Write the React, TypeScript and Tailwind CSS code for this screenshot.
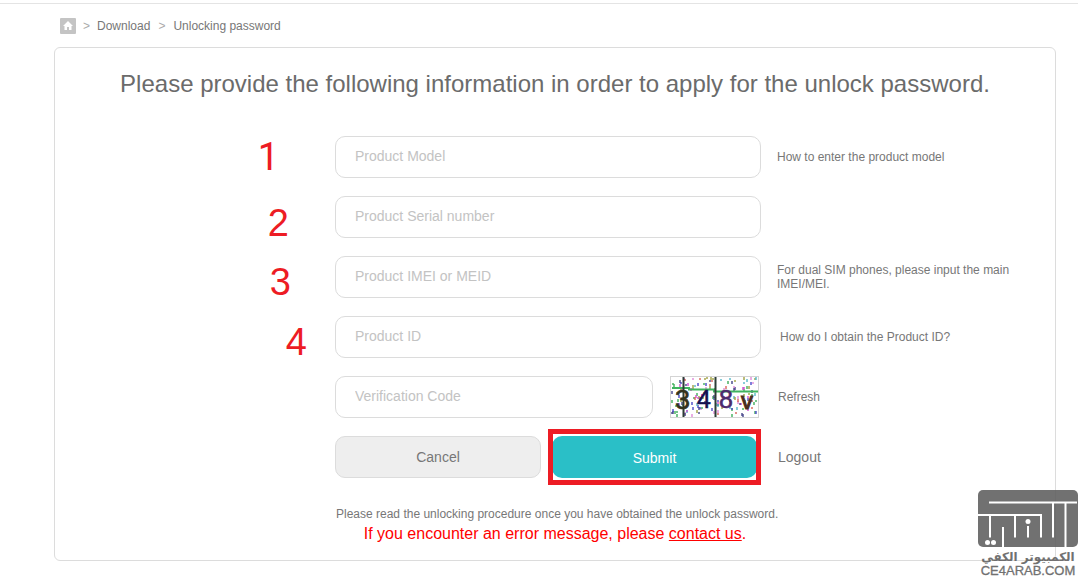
import { useState } from 'react';

interface Field {
  id: string;
  label: string;
  step: string;
  stepClass: string;
  hint?: string;
  hintClass?: string;
  isLink?: boolean;
}

const FIELDS: Field[] = [
  { id: 'model', label: 'Product Model', step: '1', stepClass: "pr-14 font-['Roboto',sans-serif]", hint: 'How to enter the product model', hintClass: 'pl-4', isLink: true },
  { id: 'serial', label: 'Product Serial number', step: '2', stepClass: 'pt-3 pr-[46px]' },
  { id: 'imei', label: 'Product IMEI or MEID', step: '3', stepClass: 'pt-2.5 pr-11', hint: 'For dual SIM phones, please input the main IMEI/MEI.', hintClass: 'pl-4' },
  { id: 'productId', label: 'Product ID', step: '4', stepClass: 'pt-2.5 pr-7', hint: 'How do I obtain the Product ID?', hintClass: 'pl-[19px]', isLink: true },
];

const ROW = 'grid grid-cols-[28%_minmax(0,1fr)_294px] items-center';
const INPUT =
  'h-[42px] w-full min-w-0 rounded-[10px] border border-[#dcdcdc] bg-white px-[19px] pb-0.5 text-sm text-[#666] placeholder:text-[#c3c3c3] outline-none';

const NOISE_COLORS = ['#d04fd0', '#4a4ac8', '#3fae5a', '#d8645a', '#54b8c8', '#a0a040', '#444488', '#e08ad8'];

// fixed seed keeps the speckles the same on every render
function makeNoise(count: number) {
  let seed = 41;
  const next = () => {
    seed = (seed * 16807) % 2147483647;
    return seed / 2147483647;
  };
  return Array.from({ length: count }, () => ({
    x: 1 + Math.floor(next() * 85),
    y: 1 + Math.floor(next() * 38),
    w: 2,
    h: next() > 0.4 ? 3 : 2,
    color: NOISE_COLORS[Math.floor(next() * NOISE_COLORS.length)],
  }));
}

const NOISE = makeNoise(150);

function Captcha() {
  return (
    <svg width="89" height="42" viewBox="0 0 89 42" role="img" aria-label="Verification code" className="shrink-0">
      <rect x="0.5" y="0.5" width="88" height="41" fill="#fff" stroke="#d4d4d4" />
      {NOISE.map((n, i) => (
        <rect key={i} x={n.x} y={n.y} width={n.w} height={n.h} fill={n.color} opacity="0.7" />
      ))}
      <path d="M2 12h17v1.5h25v2h44" fill="none" stroke="#3fb45f" strokeWidth="2" />
      <path d="M13.5 1v40M45.5 1v40" stroke="#2d3d36" strokeWidth="2" />
      <g fontFamily="Liberation Sans, Arial, sans-serif" fontSize="25" strokeWidth="0.6">
        <text x="5" y="33" fontSize="27" fill="#33331c" stroke="#33331c">3</text>
        <text x="27" y="32" fill="#15104f" stroke="#15104f">4</text>
        <text x="49" y="32" fill="#4c2a6c" stroke="#4c2a6c">8</text>
        <text x="71" y="33" fontSize="24" fill="#4a2c1c" stroke="#4a2c1c" strokeWidth="1">v</text>
      </g>
    </svg>
  );
}

function Watermark() {
  return (
    <svg width="100" height="88" viewBox="0 0 100 88" role="img" aria-label="CE4ARAB.COM" className="absolute right-0 bottom-0 opacity-90">
      <rect x="0" y="0" width="100" height="57" rx="5" fill="#626262" />
      <g fill="none" stroke="#fff" strokeWidth="2">
        <path d="M11 12.5h88M87.5 12.5v44.5" />
        <path d="M75 12.5v35" />
        <path d="M0 25h63v22.5" />
        <path d="M12 25v22.5M37 25v22.5M25 37v20M50 36v11.5" />
      </g>
      <g fill="#fff">
        <circle cx="50" cy="31.5" r="2.5" />
        <circle cx="9.5" cy="52.5" r="2.5" />
        <circle cx="15.5" cy="52.5" r="2.5" />
      </g>
      <text x="50" y="71" textAnchor="middle" direction="rtl" fontFamily="DejaVu Sans, sans-serif" fontWeight="700" fontSize="12" fill="#626262">
        الكمبيوتر الكفي
      </text>
      <text x="50" y="85" textAnchor="middle" fontFamily="Liberation Sans, Arial, sans-serif" fontSize="13" fill="#626262" stroke="#626262" strokeWidth="0.3">
        CE4ARAB.COM
      </text>
    </svg>
  );
}

function Breadcrumb() {
  return (
    <nav aria-label="Breadcrumb" className="flex h-4 items-center px-1.5 text-xs text-[#777]">
      <a href="#home" aria-label="Home" className="block size-4">
        <svg viewBox="0 0 16 16" className="size-4">
          <rect width="16" height="16" rx="1" fill="#c4c4c4" />
          <path d="M8 3 3 8h1.500v4h2.500V9h2v3h2.500V8H13z" fill="#fff" />
        </svg>
      </a>
      <span className="px-[7px] text-[#aaa]">&gt;</span>
      <a href="#download">Download</a>
      <span className="px-2 text-[#aaa]">&gt;</span>
      <a href="#unlocking">Unlocking password</a>
    </nav>
  );
}

export default function App() {
  const [values, setValues] = useState<Record<string, string>>({});

  const updateValue = (id: string, value: string) => {
    setValues({ ...values, [id]: value });
  };

  return (
    <div className="relative min-h-screen overflow-hidden bg-white pt-[3px] font-['Liberation_Sans',Arial,sans-serif] text-[#777]">
      <div className="border-t border-[#e4e4e4] pt-3.5 pr-[22px] pb-4 pl-[54px]">
        <Breadcrumb />

        <main className="mt-[13px] rounded-md border border-[#dcdcdc] pt-5 pb-3.5">
          <h1 className="text-center text-2xl text-[#6b6b6b]">
            Please provide the following information in order to apply for the unlock password.
          </h1>

          <form className="mt-9 flex flex-col gap-[18px]" onSubmit={(e) => e.preventDefault()}>
            {FIELDS.map((field) => (
              <div key={field.id} className={ROW}>
                <div className={`flex h-[42px] items-center justify-end text-[38px] leading-none text-[#ed1c24] ${field.stepClass}`}>
                  {field.step}
                </div>
                <input
                  id={field.id}
                  aria-label={field.label}
                  placeholder={field.label}
                  value={values[field.id] ?? ''}
                  onChange={(e) => updateValue(field.id, e.target.value)}
                  className={INPUT}
                />
                {field.hint && (
                  <p className={`pr-10 text-xs leading-[14px] ${field.hintClass}`}>
                    {field.isLink ? <a href={`#${field.id}`}>{field.hint}</a> : field.hint}
                  </p>
                )}
              </div>
            ))}

            <div className={ROW}>
              <div className="col-start-2 flex items-center gap-[17px] pr-0.5">
                <input
                  id="code"
                  aria-label="Verification Code"
                  placeholder="Verification Code"
                  value={values.code ?? ''}
                  onChange={(e) => updateValue('code', e.target.value)}
                  className={INPUT}
                />
                <Captcha />
              </div>
              <a href="#refresh" className="pl-[17px] text-xs">Refresh</a>
            </div>

            <div className={ROW}>
              <div className="col-start-2 flex gap-[7px]">
                <button type="button" className="h-[42px] flex-1 rounded-[10px] border border-[#dcdcdc] bg-[#eee] text-sm text-[#777]">
                  Cancel
                </button>
                <div className="relative w-[213px] px-1">
                  <button type="submit" className="h-[42px] w-full rounded-[10px] bg-[#2abfc7] pt-0.5 text-sm text-white">
                    Submit
                  </button>
                  <div className="pointer-events-none absolute inset-x-0 -inset-y-[7px] border-5 border-[#ed1c24]" />
                </div>
              </div>
              <a href="#logout" className="pl-[17px] text-sm">Logout</a>
            </div>
          </form>

          <p className="mt-7 ml-[28%] pl-px text-xs">
            Please read the unlocking procedure once you have obtained the unlock password.
          </p>
          <p className="text-center text-base text-[#f00]">
            If you encounter an error message, please <a href="#contact" className="underline">contact us</a>.
          </p>
        </main>
      </div>
      <Watermark />
    </div>
  );
}
